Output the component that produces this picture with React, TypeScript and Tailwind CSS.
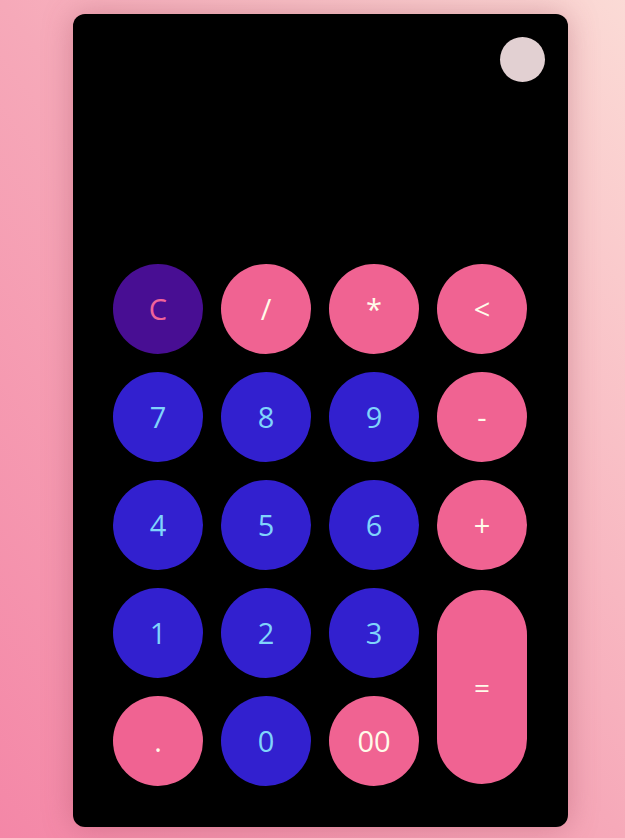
const rows: { label: string; kind: "clear" | "op" | "num" | "eq" }[] = [
  { label: "C", kind: "clear" },
  { label: "/", kind: "op" },
  { label: "*", kind: "op" },
  { label: "<", kind: "op" },
  { label: "7", kind: "num" },
  { label: "8", kind: "num" },
  { label: "9", kind: "num" },
  { label: "-", kind: "op" },
  { label: "4", kind: "num" },
  { label: "5", kind: "num" },
  { label: "6", kind: "num" },
  { label: "+", kind: "op" },
  { label: "1", kind: "num" },
  { label: "2", kind: "num" },
  { label: "3", kind: "num" },
  { label: "=", kind: "eq" },
  { label: ".", kind: "op" },
  { label: "0", kind: "num" },
  { label: "00", kind: "op" },
];

function Key({ label, kind }: { label: string; kind: string }) {
  if (kind === "eq") {
    return (
      <button className="row-span-2 my-[2px] w-[90px] rounded-full bg-[#f06392] text-[28px] text-[#fffbea] flex items-center justify-center">
        {label}
      </button>
    );
  }
  const look =
    kind === "clear"
      ? "bg-[#480e93] text-[#f0649a]"
      : kind === "num"
      ? "bg-[#3220cf] text-[#80d4fb]"
      : "bg-[#f06392] text-[#fffbea]";
  return (
    <button className={`h-[90px] w-[90px] rounded-full text-[29px] flex items-center justify-center ${look}`}>
      {label}
    </button>
  );
}

export default function App() {
  return (
    <div
      className="min-h-[838px] w-full bg-gradient-to-tr from-[#f487a7] via-[#f6a9b9] to-[#fbdbd6] pl-[73px] pt-[14px]"
      style={{ fontFamily: '"Open Sans", "Noto Sans", sans-serif' }}
    >
      <div className="flex h-[813px] w-[495px] flex-col rounded-[12px] bg-black px-[40px] pb-[41px] pt-[23px] shadow-[0_0_30px_rgba(150,60,80,0.35)]">
        <div className="flex justify-end -mr-[17px]">
          <div className="h-[45px] w-[45px] rounded-full bg-[#e2d0d2]" />
        </div>
        <div className="mt-auto grid grid-cols-[repeat(4,90px)] auto-rows-[90px] gap-[18px]">
          {rows.map((r) => (
            <Key key={r.label} label={r.label} kind={r.kind} />
          ))}
        </div>
      </div>
    </div>
  );
}
